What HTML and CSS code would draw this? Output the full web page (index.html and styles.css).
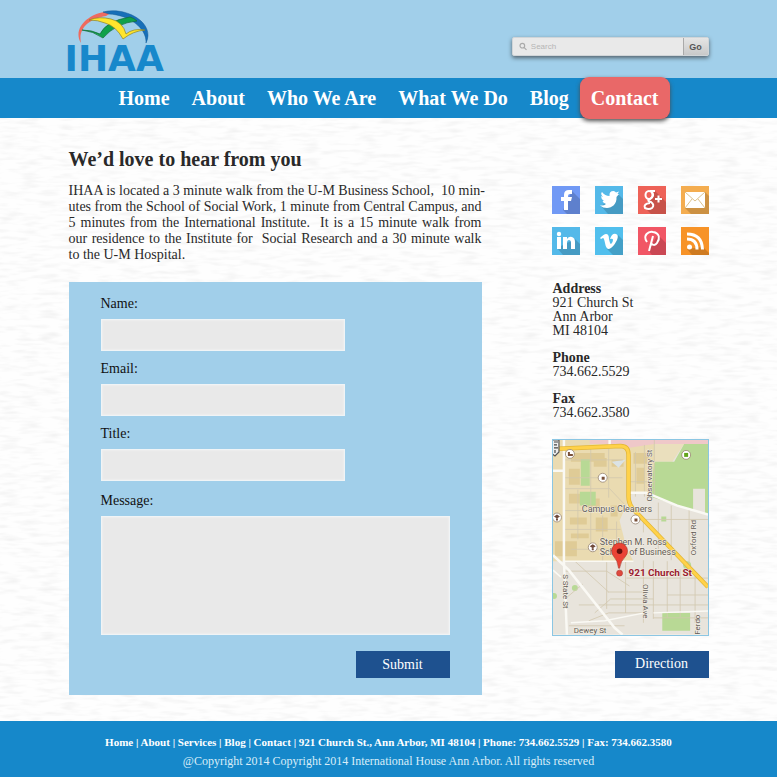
FILE: index.html
```html
<!DOCTYPE html>
<html lang="en">
<head>
<meta charset="utf-8">
<meta name="viewport" content="width=device-width, initial-scale=1">
<title>IHAA - Contact</title>
<link rel="stylesheet" href="styles.css">
</head>
<body>
<svg class="paper" aria-hidden="true">
  <filter id="grain" x="0" y="0" width="100%" height="100%">
    <feTurbulence type="fractalNoise" baseFrequency="0.05 0.24" numOctaves="2" seed="4"/>
    <feColorMatrix values="0 0 0 0 0.5  0 0 0 0 0.5  0 0 0 0 0.5  0.4 0 0 0 -0.18"/>
  </filter>
  <rect width="100%" height="100%" filter="url(#grain)"/>
</svg>
<header class="top">
  <div class="wrap top-row">
    <a class="logo" href="#" aria-label="IHAA home">
      <svg class="logo-mark" viewBox="0 0 74 35" aria-hidden="true">
        <path d="M5 34C-4 20 12 2 38 2L30 7C12 10 2 20 5 34Z" fill="#ee6a5f"/>
        <path d="M27 3C50-3 80 14 70 34C71 19 53 6 33 5Z" fill="#176fb8" stroke="#155b96" stroke-width=".5"/>
        <path d="M6 21Q16 21 24 25Q30 12 54 8Q58 9 61 12Q40 14 27 29Q17 22 6 21Z" fill="#10a14b" stroke="#116b35" stroke-width=".7"/>
        <path d="M13 11Q23 7 35 10Q47 13 50 25Q57 19 69 21Q57 22 47 30Q40 17 29 14Q22 11 13 11Z" fill="#ffe52c" stroke="#8c8425" stroke-width=".7"/>
      </svg>
      <span class="logo-text">IHAA</span>
    </a>
    <form class="search" role="search">
      <label class="search-field">
        <svg viewBox="0 0 10 10" aria-hidden="true"><circle cx="4" cy="4" r="2.8"/><path d="M6 6L9 9"/></svg>
        <input type="search" placeholder="Search" aria-label="Search">
      </label>
      <button type="submit">Go</button>
    </form>
  </div>
</header>
<nav class="nav" aria-label="Main">
  <a href="#">Home</a>
  <a href="#">About</a>
  <a href="#">Who We Are</a>
  <a href="#">What We Do</a>
  <a href="#">Blog</a>
  <a class="current" href="#" aria-current="page">Contact</a>
</nav>
<main class="wrap main">
  <section class="content">
    <h1>We’d love to hear from you</h1>
    <p class="intro">
      <span>IHAA is located a 3 minute walk from the U-M Business School,&nbsp; 10 min-</span>
      <span>utes from the School of Social Work, 1 minute from Central Campus, and</span>
      <span>5 minutes from the International Institute.&nbsp; It is a 15 minute walk from</span>
      <span>our residence to the Institute for&nbsp; Social Research and a 30 minute walk</span>
      <span>to the U-M Hospital.</span>
    </p>
    <form class="contact">
      <label for="name">Name:</label>
      <input id="name" type="text">
      <label for="email">Email:</label>
      <input id="email" type="email">
      <label for="title">Title:</label>
      <input id="title" type="text">
      <label for="message">Message:</label>
      <textarea id="message"></textarea>
      <button class="button" type="submit">Submit</button>
    </form>
  </section>
  <aside class="side">
    <div class="social">
      <a class="facebook" href="#" aria-label="Facebook"><svg viewBox="0 0 28 28"><path class="shade" d="M20 5L28 13V28H15L11 24Z"/><path d="M12 24V15H9V11H12V9Q12 4 17 4H20V8H18Q16 8 16 10V11H20L19 15H16V24Z"/></svg></a>
      <a class="twitter" href="#" aria-label="Twitter"><svg viewBox="0 0 28 28"><path class="shade" d="M23 8L28 13V28H13L6 20Z"/><path d="M24 8L21.500 11C22 18 17 22 12 22Q8 22 5 19.500Q9 20 11 18Q8 17 7.500 15H9Q6 13 6 10L8 11Q5 8 7 6Q10 10 14.500 10Q14 5 18.500 5Q20 5 21 6.500L24 5.500L22.500 8Z"/></svg></a>
      <a class="google" href="#" aria-label="Google Plus"><svg viewBox="0 0 28 28"><path class="shade" d="M17 5L28 16V28H13L6 21Z"/><g class="line"><ellipse cx="11" cy="9" rx="3.500" ry="4"/><path d="M12 5H17M14 6Q17 10 12 13Q8 15 13 16Q17 19 14 22Q11 24 7 22Q5 18 12 17M17 13H24M20.500 9.500V16.500"/></g></svg></a>
      <a class="mail" href="#" aria-label="Email"><svg viewBox="0 0 28 28"><path class="shade" d="M24 6L28 10V28H10L4 22Z"/><path d="M4 6H24V22H4Z"/><path class="crease" d="M4 6L14 15L24 6M4 22L11 13M24 22L17 13"/></svg></a>
      <a class="linkedin" href="#" aria-label="LinkedIn"><svg viewBox="0 0 28 28"><path class="shade" d="M23 12L28 17V28H11L5 21Z"/><path d="M5 10H9V22H5ZM11 10H15V12Q17 9 20 10Q23 11 23 15V22H19V16Q19 13 17 13Q15 13 15 16V22H11Z"/><circle cx="7" cy="7" r="2.200"/></svg></a>
      <a class="vimeo" href="#" aria-label="Vimeo"><svg viewBox="0 0 28 28"><path class="shade" d="M23 8L28 13V28H18L12 22Z"/><path d="M5 11Q9 7 11 7Q14 7 14 12Q15 17 16 17Q18 15 18 13Q18 11 15 12Q17 6 21 7Q24 8 22 13Q18 21 14 22Q11 22 10 16Q9 11 8 11L6 12Z"/></svg></a>
      <a class="pinterest" href="#" aria-label="Pinterest"><svg viewBox="0 0 28 28"><path class="shade" d="M20 8L28 16V28H14L10 23Z"/><path class="line" d="M9 15C4 8 11 4 15 5C22 6 22 12 19 16C17 19 14 18 13 16M15 9L11 24"/></svg></a>
      <a class="rss" href="#" aria-label="RSS"><svg viewBox="0 0 28 28"><path class="shade" d="M22 20L28 26V28H11L6 22Z"/><circle cx="8.500" cy="20" r="2.500"/><path class="line thick" d="M6 12Q16 12 16 22.500M6 7Q21 7 21.500 22.500"/></svg></a>
    </div>
    <address>
      <div><strong>Address</strong><span>921 Church St</span><span>Ann Arbor</span><span>MI 48104</span></div>
      <div><strong>Phone</strong><span>734.662.5529</span></div>
      <div><strong>Fax</strong><span>734.662.3580</span></div>
    </address>
    <svg class="map" viewBox="0 0 156 196" role="img" aria-label="Map showing 921 Church St">
      <rect width="156" height="196" fill="#e8e4dc"/>
      <path d="M0 0H102V52L79 54L67 81L74 109L81 122H0Z" fill="#eadbb1"/>
      <path d="M102 4H132L120 22H102Z" fill="#eadfbd"/>
      <path d="M37 0H156V4H102L75 8L57 4H37Z" fill="#efc8c9"/>
      <g fill="#dfcb96"><path d="M18 13H52V22H18ZM16 29H27V45H16ZM41 18H54V27H41ZM16 54H28V64H16ZM59 20H71V27H59ZM30 59H47V68H30ZM17 78H34V85H17ZM43 78H55V92H43ZM2 102H24V117H2ZM81 13H96V24H81ZM84 28H92V44H84ZM18 94H36V99H18ZM58 66H65V77H58Z"/></g>
      <g fill="#b8d995"><path d="M102 22H122L132 4H156V75L98 57ZM28 19H37V46H28ZM27 52H43V66H27ZM109 77H114V82H109ZM110 174H138V192H110Z"/><circle cx="1" cy="157" r="3"/><circle cx="22" cy="149" r="3"/><circle cx="135" cy="126" r="4"/></g>
      <path d="M59 22L73 20L66 28Z" fill="#dbe3e5"/>
      <path d="M141 49H153V75L141 70Z" fill="#e8e4dc"/>
      <g fill="none" stroke="#d2c8ae" stroke-width=".8">
        <path d="M12 38H70M12 49H56M12 71H53M12 90H68M56 9V58M38 9V105M25 50V100M12 20H70M56 48L75 68M83 12V57M92 5V57M102 0V58M76 42H103M18 110H70M50 76V122"/>
        <path d="M64 82V122M79 80H156M91 79V93M106 63V110M119 66V121M137 68V137M54 123V170M73 122V174M91 121V184M101 122V180M115 122V179M128 130V178M143 132V184M12 132H54L77 147M22 122L56 153M55 153H91M46 166H156M42 174L58 160H101M36 182L56 174H91M115 156H156M74 139H156M101 179H156M12 160L30 145M26 166H42M16 187H72"/>
      </g>
      <g fill="none" stroke="#faf9f4"><path d="M11 0V122L14 196M0 31H11M0 116L16 131L62 189L70 196M57 0V8M76 53H94L125 66L156 75" stroke-width="2.500"/><path d="M0 131L8 138M18 184L52 182L92 174M101 174L156 172M12 122H81" stroke-width="1.500"/></g>
      <path d="M0 9L68 6Q76 6 76 15V57Q76 66 84 73L156 148" fill="none" stroke="#e3b738" stroke-width="4.500"/>
      <path d="M0 9L68 6Q76 6 76 15V57Q76 66 84 73L156 148" fill="none" stroke="#ffd24a" stroke-width="3"/>
      <g class="poi"><circle cx="17" cy="14" r="4.500"/><circle cx="50" cy="38" r="4.500"/><circle cx="83" cy="80" r="4.500"/><circle cx="134" cy="15" r="4.500"/><circle cx="4" cy="78" r="4.500"/><circle cx="40" cy="108" r="4.500"/></g>
      <path d="M-2 0H6V12L2 16L-2 13Z" fill="#eee" stroke="#555" stroke-width="1.200"/>
      <path d="M1 2H5M1 5H4M1 8H5M2 10V13" stroke="#444" stroke-width="1.200"/>
      <path d="M49 37H52V40H49ZM82 79H85V82H82ZM15 12V16H20V14H17V12Z" fill="#795039"/><path d="M132 13H136V17H132Z" fill="#62a51b"/>
      <path d="M1 77L4 75L7 77L4 79ZM3 79H5V81H3ZM37 107L40 105L43 107L40 109ZM39 109H41V111H39Z" fill="#704b3c"/>
      <g class="map-label">
        <text x="29" y="72">Campus Cleaners</text><text x="47" y="106">Stephen M. Ross</text><text x="47" y="116">School of Business</text>
        <text class="street" transform="translate(100 62) rotate(-90)">Observatory St</text>
        <text class="street" transform="translate(144 116) rotate(-90)">Oxford Rd</text>
        <text class="street" transform="translate(10 135) rotate(90)">S State St</text>
        <text class="street" transform="translate(91 145) rotate(90)">Olivia Ave</text>
        <text class="street" transform="translate(148 196) rotate(-90)">Ferdo</text>
        <text class="street" x="21" y="194">Dewey St</text>
        <text class="place" x="76" y="137">921 Church St</text>
      </g>
      <path d="M66 129Q65 121 61 117A8 8 0 1 1 73 117Q68 122 67 129Z" fill="#ea4335" stroke="#a5362c" stroke-width=".6"/>
      <circle cx="67" cy="112" r="2.800" fill="#64100c"/><circle cx="67" cy="134" r="3" fill="#df493e" stroke="#b43a33" stroke-width=".6"/>
    </svg>
    <button class="button" type="button">Direction</button>
  </aside>
</main>
<footer>
  <p class="links"><a href="#">Home</a> | <a href="#">About</a> | <a href="#">Services</a> | <a href="#">Blog</a> | <a href="#">Contact</a> | 921 Church St., Ann Arbor, MI 48104 | Phone: 734.662.5529 | Fax: 734.662.3580</p>
  <p>@Copyright 2014 Copyright 2014 International House Ann Arbor. All rights reserved</p>
</footer>
</body>
</html>
```
FILE: styles.css
```css
* { box-sizing: border-box; }
body {
  position: relative;
  margin: 0;
  min-height: 100vh;
  display: flex;
  flex-direction: column;
  background: #fefefe;
  color: #292929;
  font-family: "Liberation Serif", serif;
  font-size: 14px;
}
a { color: inherit; text-decoration: none; }
p, h1 { margin: 0; }
.paper { position: absolute; inset: 0; width: 100%; height: 100%; z-index: -1; }
.wrap { width: 100%; max-width: 640px; margin: 0 auto; }
.top { background: #a1cfea; }
.top-row { display: flex; justify-content: space-between; align-items: flex-end; height: 78px; }
.logo { display: flex; flex-direction: column; align-items: flex-start; padding-bottom: 4px; color: #1788cb; }
.logo-mark { width: 74px; height: 35px; margin-left: 7px; }
.logo-text { margin-left: -4px; font: bold 36px/30px "DejaVu Sans", sans-serif; }
.search { display: flex; height: 19px; margin-bottom: 22px; border: 1px solid #d1d5d8; border-radius: 2px; box-shadow: 0 2px 4px #53616b; background: #e9e9e9; }
.search-field { display: flex; align-items: center; gap: 4px; width: 170px; padding-left: 6px; }
.search svg { width: 9px; height: 9px; fill: none; stroke: #aaa; stroke-width: 1.4; }
.search input { min-width: 0; width: 100%; padding: 0; border: 0; outline: 0; background: transparent; font: 8px "Liberation Sans", sans-serif; }
.search input::placeholder { color: #b5b5b5; opacity: 1; }
.search button { width: 25px; padding: 0; border: 0; border-left: 1px solid #aaa; background: linear-gradient(#e5e5e5, #c9c9c9); color: #555; font: bold 9px "Liberation Sans", sans-serif; }
.nav { display: flex; justify-content: center; align-items: center; gap: 22px; height: 40px; background: #1688ca; color: #fff; font-size: 20px; font-weight: bold; white-space: nowrap; }
.nav .current { margin: 0 -11px; padding: 0 11px; line-height: 42px; border-radius: 9px; background: #e96868; box-shadow: 0 2px 4px #4c4c4c; }
.main { flex: 1; display: grid; grid-template-columns: minmax(0, 413fr) minmax(0, 157fr); column-gap: 70px; padding: 30px 0 25px; }
h1 { font-size: 20px; line-height: 22px; }
.intro { margin: 13px 0 19px; line-height: 16px; }
.intro span { display: block; text-align-last: justify; white-space: nowrap; }
.intro span:last-child { text-align-last: left; }
.contact { display: flex; flex-direction: column; align-items: flex-start; padding: 13px 32px 17px; background: #a1cfea; color: #111; }
.contact label { line-height: 18px; margin-bottom: 6px; }
.contact input, .contact textarea { display: block; width: 70%; height: 32px; margin: 0 0 9px; border: 1px solid #f0f4f6; border-radius: 0; background: #e9e9e9; box-shadow: inset 0 0 2px #f7f7f7; font: inherit; padding: 6px; }
.contact #title { margin-bottom: 11px; }
.contact textarea { width: 100%; height: 119px; margin-bottom: 16px; resize: none; }
.button { align-self: flex-end; width: 94px; height: 27px; padding: 0; border: 0; background: #1e518f; color: #fff; font: 14px "Liberation Serif", serif; }
.side { display: flex; flex-direction: column; padding-top: 38px; }
.social { display: grid; grid-template-columns: repeat(4, 28px); justify-content: space-between; row-gap: 13px; }
.social a { height: 28px; }
.social svg { display: block; width: 28px; height: 28px; fill: #fff; }
.social .shade { fill: #000; opacity: .16; }
.social .line { fill: none; stroke: #fff; stroke-width: 2; }
.social .thick { stroke-width: 3; }
.social .crease { fill: none; stroke: #dcc28d; stroke-width: 1; }
.facebook { background: #7199f5; }
.twitter, .linkedin { background: #54b9e9; }
.vimeo { background: #51bfed; }
.google { background: #ee6258; }
.mail { background: #f4ad50; }
.pinterest { background: #f15665; }
.rss { background: #f79328; }
address { display: grid; gap: 13px; margin: 27px 0 19px; font-style: normal; line-height: 14px; padding-left: 1px; }
address strong, address span { display: block; }
.map { display: block; width: 100%; border: 1px solid #8bc6e3; margin-bottom: 15px; }
.map-label { font: 9px Roboto, sans-serif; fill: #625b56; stroke: #f5f0e4; stroke-width: 1px; paint-order: stroke; }
.street { font-size: 8px; }
.place { font-size: 10px; font-weight: bold; fill: #9b1c32; }
.poi { fill: #fff; stroke: #96836f; stroke-width: .8; }
footer { padding: 13px 12px 8px; background: #1688ca; color: #fff; text-align: center; font-size: 12px; line-height: 16px; }
footer p + p { margin-top: 3px; color: #d9edf8; }
.links { font-size: 11px; font-weight: bold; }
```
